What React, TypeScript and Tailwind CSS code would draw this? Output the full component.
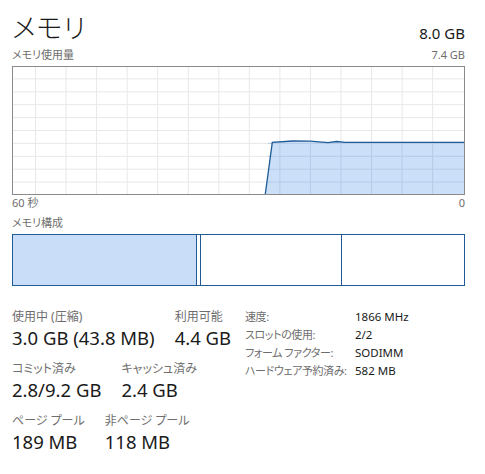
import React from 'react';

const gridX = Array.from({ length: 14 }, (_, i) => 23.5 + i * 30.55);
const gridY = Array.from({ length: 9 }, (_, i) => (i + 1) * 12.9);

const usagePath =
  'M253.3,128 L260.3,76.3 L281,75 L298,75.2 L316,76.7 L324.7,75.5 L333,76.3 L452,76.3 L452,128 Z';
const usageLine = 'M253.3,128 L260.3,76.3 L281,75 L298,75.2 L316,76.7 L324.7,75.5 L333,76.3 L452,76.3';

const UsageGraph: React.FC = () => (
  <svg width="453" height="129" viewBox="0 0 453 129" className="block">
    <rect x="0" y="0" width="453" height="129" fill="#ffffff" />
    {gridX.map((x) => (
      <line key={'x' + x} x1={x} y1="0" x2={x} y2="129" stroke="#e8e8e8" strokeWidth="1" />
    ))}
    {gridY.map((y) => (
      <line key={'y' + y} x1="0" y1={y} x2="453" y2={y} stroke="#e8e8e8" strokeWidth="1" />
    ))}
    <path d={usagePath} fill="#c6dcf8" fillOpacity="0.9" />
    {gridX
      .filter((x) => x > 258)
      .map((x) => (
        <line key={'fx' + x} x1={x} y1="77" x2={x} y2="128" stroke="#b5cbe6" strokeWidth="1" />
      ))}
    {gridY
      .filter((y) => y > 77)
      .map((y) => (
        <line key={'fy' + y} x1="256" y1={y} x2="452" y2={y} stroke="#b5cbe6" strokeWidth="1" />
      ))}
    <path d={usageLine} fill="none" stroke="#1d5a96" strokeWidth="1.3" />
    <rect x="0.5" y="0.5" width="452" height="128" fill="none" stroke="#8a8a8a" strokeWidth="1" />
  </svg>
);

const Stat: React.FC<{ label: string; value: string }> = ({ label, value }) => (
  <div className="flex flex-col">
    <span className="text-[12px] leading-[16px] text-[#6e6e6e] whitespace-nowrap">{label}</span>
    <span className="text-[18.5px] leading-[26px] text-[#1a1a1a] whitespace-nowrap">{value}</span>
  </div>
);

const specs = [
  ['速度:', '1866 MHz'],
  ['スロットの使用:', '2/2'],
  ['フォーム ファクター:', 'SODIMM'],
  ['ハードウェア予約済み:', '582 MB'],
];

export default function App() {
  return (
    <div className="w-[485px] h-[474px] bg-white pl-3 pr-[20px] pt-[8px] font-['Noto_Sans','Noto_Sans_CJK_JP',sans-serif] [font-feature-settings:'palt'] text-[#1a1a1a] overflow-hidden">
      {/* Header */}
      <div className="flex justify-between items-end h-[36px]">
        <h1 className="text-[27px] leading-[32px] font-light tracking-[1px]">メモリ</h1>
        <span className="text-[15px] leading-[22px]">8.0 GB</span>
      </div>

      {/* Usage graph */}
      <div className="flex justify-between items-center h-[22px] text-[11px] text-[#6e6e6e]">
        <span>メモリ使用量</span>
        <span>7.4 GB</span>
      </div>
      <UsageGraph />
      <div className="flex justify-between h-[17px] items-center text-[11px] text-[#6e6e6e]">
        <span>60 秒</span>
        <span>0</span>
      </div>

      {/* Composition */}
      <div className="flex items-center h-[22px] text-[11px] text-[#6e6e6e]">メモリ構成</div>
      <div className="flex h-[52px] border border-[#1f5c96]">
        <div className="w-[184px] bg-[#c9ddf8] border-r border-[#1f5c96]" />
        <div className="w-[4px] border-r border-[#1f5c96]" />
        <div className="w-[141px] border-r border-[#1f5c96]" />
        <div className="flex-1" />
      </div>

      {/* Stats */}
      <div className="flex mt-[23px]">
        <div className="w-[233px] flex flex-col gap-[10px]">
          <div className="flex gap-[20px]">
            <Stat label="使用中 (圧縮)" value="3.0 GB (43.8 MB)" />
            <Stat label="利用可能" value="4.4 GB" />
          </div>
          <div className="flex gap-[20px]">
            <Stat label="コミット済み" value="2.8/9.2 GB" />
            <Stat label="キャッシュ済み" value="2.4 GB" />
          </div>
          <div className="flex gap-[20px]">
            <Stat label="ページ プール" value="189 MB" />
            <Stat label="非ページ プール" value="118 MB" />
          </div>
        </div>
        <div className="flex flex-col leading-[18px] -mt-[1px]">
          {specs.map(([k, v]) => (
            <div key={k} className="flex items-baseline">
              <span className="w-[110px] text-[11px] tracking-[-0.4px] text-[#6e6e6e] whitespace-nowrap">{k}</span>
              <span className="text-[11.5px] text-[#1a1a1a]">{v}</span>
            </div>
          ))}
        </div>
      </div>
    </div>
  );
}
